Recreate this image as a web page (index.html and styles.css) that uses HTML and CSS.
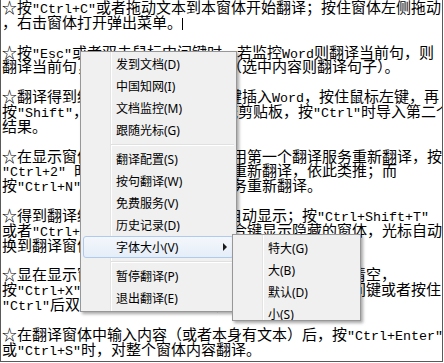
FILE: index.html
```html
<!DOCTYPE html>
<html lang="zh-CN">
<head>
<meta charset="utf-8">
<title>翻译</title>
<link rel="stylesheet" href="styles.css">
</head>
<body>
<div class="screen">
  <div class="doc">
    <div class="ln">☆按<span class="m">"Ctrl+C"</span>或者拖动文本到本窗体开始翻译；按住窗体左侧拖动</div>
    <div class="ln">，右击窗体打开弹出菜单。<span class="caret"></span></div>
    <div class="ln"></div>
    <div class="ln">☆按<span class="m">"Esc"</span>或者双击鼠标中间键时，若监控<span class="m">Word</span>则翻译当前句，则</div>
    <div class="ln">翻译当前句，否则翻译所在的段落（选中内容则翻译句子）。</div>
    <div class="ln"></div>
    <div class="ln">☆翻译得到结果后，可以按下快捷键插入<span class="m">Word</span>，按住鼠标左键，再</div>
    <div class="ln">按<span class="m">"Shift"</span>，将翻译结果复制到系统剪贴板，按<span class="m">"Ctrl"</span>时导入第二个</div>
    <div class="ln">结果。</div>
    <div class="ln"></div>
    <div class="ln">☆在显示窗体中按<span class="m"> "Ctrl+1" </span>时使用第一个翻译服务重新翻译，按</div>
    <div class="ln"><span class="m">"Ctrl+2" </span>时使用第二个翻译服务<span class="m"> </span>重新翻译，依此类推；而</div>
    <div class="ln">按<span class="m">"Ctrl+N"</span>时，使用第<span class="m"> N</span>个翻译服务重新翻译。</div>
    <div class="ln"></div>
    <div class="ln">☆得到翻译结果后，若翻译窗体不自动显示；按<span class="m">"Ctrl+Shift+T"</span></div>
    <div class="ln">或者<span class="m">"Ctrl+Alt"</span>加上字母的快捷组合键显示隐藏的窗体，光标自动切</div>
    <div class="ln">换到翻译窗体中，并可以直接进行编辑。</div>
    <div class="ln"></div>
    <div class="ln">☆显在显示窗体中，按<span class="m">"Delete"</span>键可将窗体全部内容清空，</div>
    <div class="ln">按<span class="m">"Ctrl+X"</span>时剪切窗体所有内容，也可以双击鼠标中间键或者按住</div>
    <div class="ln"><span class="m">"Ctrl"</span>后双击翻译窗体中的单词，可以直接查询该词</div>
    <div class="ln"></div>
    <div class="ln">☆在翻译窗体中输入内容（或者本身有文本）后，按<span class="m">"Ctrl+Enter"</span></div>
    <div class="ln">或<span class="m">"Ctrl+S"</span>时，对整个窗体内容翻译。</div>
  </div>

  <div class="menu main-menu">
    <div class="item">发到文档(D)</div>
    <div class="item">中国知网(I)</div>
    <div class="item">文档监控(M)</div>
    <div class="item">跟随光标(G)</div>
    <div class="sep"></div>
    <div class="item">翻译配置(S)</div>
    <div class="item">按句翻译(W)</div>
    <div class="item">免费服务(V)</div>
    <div class="item">历史记录(D)</div>
    <div class="item hot">字体大小(V)<span class="arrow"></span></div>
    <div class="sep"></div>
    <div class="item">暂停翻译(P)</div>
    <div class="item">退出翻译(E)</div>
  </div>

  <div class="menu sub-menu">
    <div class="item">特大(G)</div>
    <div class="item">大(B)</div>
    <div class="item">默认(D)</div>
    <div class="item">小(S)</div>
  </div>
</div>
</body>
</html>
```

FILE: styles.css
```css
html, body {
  margin: 0;
  padding: 0;
  background: #ffffff;
}

.screen {
  position: relative;
  width: 444px;
  height: 363px;
  overflow: hidden;
  background: #ffffff;
}

.doc {
  box-sizing: border-box;
  width: 443px;
  height: 362px;
  border-left: 1px solid #5a5a5a;
  border-right: 1px solid #5a5a5a;
  border-bottom: 1px solid #5a5a5a;
  padding-left: 1px;
  overflow: hidden;
  background: #ffffff;
  color: #000000;
  font-family: "Noto Sans CJK SC", sans-serif;
  font-size: 15px;
}

.ln {
  height: 14.87px;
  line-height: 14.87px;
  white-space: pre;
}

.m {
  font-family: "Liberation Mono", monospace;
  font-size: 13.333px;
}

.caret {
  display: inline-block;
  width: 1px;
  height: 12px;
  background: #000000;
  vertical-align: -2px;
}

.menu {
  position: absolute;
  box-sizing: border-box;
  border: 1px solid #979797;
  background:
    linear-gradient(to right,
      transparent 29px, #e2e3e3 29px, #e2e3e3 30px,
      #ffffff 30px, #ffffff 31px, transparent 31px),
    #f0f0f0;
  box-shadow: 2px 2px 3px rgba(0, 0, 0, 0.35);
  font-family: "Noto Sans", "Noto Sans CJK SC", sans-serif;
  font-size: 12px;
  color: #000000;
}

.main-menu {
  left: 80px;
  top: 51px;
  width: 157px;
  height: 261px;
  padding: 1px 2px 2px 2px;
}

.sub-menu {
  left: 232px;
  top: 234px;
  width: 129px;
  height: 87px;
  padding: 2px 2px 0 2px;
  overflow: hidden;
}

.item {
  box-sizing: border-box;
  height: 22px;
  display: flex;
  align-items: center;
  padding-left: 32px;
  border: 1px solid transparent;
  border-radius: 3px;
  white-space: nowrap;
}

.item.hot {
  border-color: #aecbef;
  background: linear-gradient(to bottom, #f4f7fc, #e5edf8);
}

.arrow {
  margin-left: auto;
  margin-right: 6px;
  width: 0;
  height: 0;
  border-left: 4px solid #1a1a1a;
  border-top: 4px solid transparent;
  border-bottom: 4px solid transparent;
}

.sep {
  height: 7px;
  margin-left: 28px;
  background: linear-gradient(to bottom,
    transparent 3px, #e0e0e0 3px, #e0e0e0 4px,
    #ffffff 4px, #ffffff 5px, transparent 5px);
}
```
